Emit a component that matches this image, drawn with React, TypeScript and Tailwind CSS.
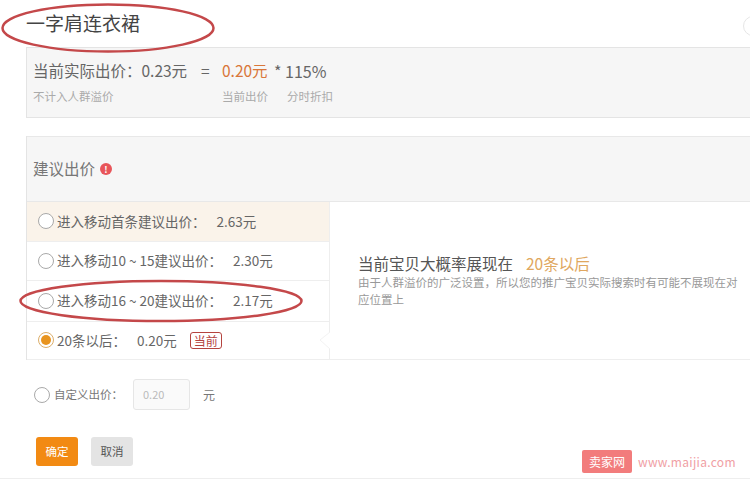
import React from 'react';

const font = { fontFamily: '"Noto Sans CJK SC", "Liberation Sans", sans-serif' };

const Radio = ({ checked = false }: { checked?: boolean }) => (
  <span className={`flex h-[16px] w-[16px] shrink-0 items-center justify-center rounded-full border bg-white ${checked ? 'border-[#dcae6a]' : 'border-[#a9a9a9]'}`}>
    {checked && <span className="h-[10px] w-[10px] rounded-full bg-[#e8941f]" />}
  </span>
);

const rows = [
  { label: '进入移动首条建议出价：', price: '2.63元', cls: 'bg-[#faf3ea] h-[39px]' },
  { label: '进入移动10 ~ 15建议出价：', price: '2.30元', cls: 'h-[39px] border-t border-[#eeeeee]' },
  { label: '进入移动16 ~ 20建议出价：', price: '2.17元', cls: 'h-[41px] border-t border-[#eeeeee]' },
];

export default function App() {
  return (
    <div className="relative h-[481px] w-[750px] overflow-hidden bg-white text-[#666666]" style={font}>
      <h1 className="h-[47px] pl-[26px] pt-[8px] text-[19px] leading-[30px] text-[#444444]">一字肩连衣裙</h1>

      <div className="ml-[26px] h-[71px] border border-r-0 border-[#e4e4e4] bg-[#f6f6f6] pl-[6px] pt-[12px]">
        <div className="flex h-[22px] items-center text-[15.5px] text-[#666666]">
          <span className="w-[168px]">当前实际出价：0.23元</span>
          <span className="w-[21px]">=</span>
          <span className="w-[52px] text-[#d9773a]">0.20元</span>
          <span className="text-[16px]">* 115%</span>
        </div>
        <div className="mt-[6px] flex text-[11.5px] leading-[16px] text-[#aaaaaa]">
          <span className="w-[189px]">不计入人群溢价</span>
          <span className="w-[65px]">当前出价</span>
          <span>分时折扣</span>
        </div>
      </div>

      <div className="ml-[26px] mt-[18px] border-l border-[#e4e4e4]">
        <div className="flex h-[66px] items-center gap-[5px] border-y border-[#e8e8e8] bg-[#f6f6f6] pl-[6px] text-[15.5px] text-[#777777]">
          <span>建议出价</span>
          <span className="flex h-[12px] w-[12px] items-center justify-center rounded-full bg-[#e8555a] text-[9px] font-bold leading-none text-white">!</span>
        </div>

        <div className="flex border-b border-[#eeeeee]">
          <div className="w-[303px] shrink-0 border-r border-[#eeeeee]">
            {rows.map((r) => (
              <div key={r.label} className={`flex items-center pb-[1px] pl-[11px] text-[13.5px] text-[#666666] ${r.cls}`}>
                <Radio />
                <span className="ml-[3px]">{r.label}</span>
                <span className="ml-[11px]">{r.price}</span>
              </div>
            ))}
            <div className="flex h-[38px] items-center border-t border-[#eeeeee] pb-[1px] pl-[11px] text-[13.5px] text-[#666666]">
              <Radio checked />
              <span className="ml-[3px]">20条以后：</span>
              <span className="ml-[11px]">0.20元</span>
              <span className="ml-[13px] rounded-[3px] border border-[#b5443f] px-[3px] text-[12px] leading-[15px] text-[#b5443f]">当前</span>
            </div>
          </div>
          <div className="flex-1 pl-[28px] pt-[50px]">
            <div className="flex text-[15.5px] leading-[22px] text-[#555555]">
              <span>当前宝贝大概率展现在</span>
              <span className="ml-[13px] text-[#e0a760]">20条以后</span>
            </div>
            <p className="w-[383px] text-[11.5px] leading-[17px] text-[#999999]">
              由于人群溢价的广泛设置，所以您的推广宝贝实际搜索时有可能不展现在对应位置上
            </p>
          </div>
        </div>
      </div>

      <div className="ml-[34px] mt-[19px] flex h-[31px] items-center text-[#777777]">
        <Radio />
        <span className="ml-[4px] w-[79px] text-[11.5px]">自定义出价：</span>
        <div className="flex h-[31px] w-[57px] items-center rounded-[3px] border border-[#e6e6e6] bg-[#fafafa] pl-[9px] text-[11px] text-[#bbbbbb]">0.20</div>
        <span className="ml-[13px] text-[12px]">元</span>
      </div>

      <div className="ml-[36px] mt-[27px] flex gap-[13px] text-[11.5px]">
        <button className="h-[29px] w-[42px] rounded-[3px] bg-[#f28a13] text-white">确定</button>
        <button className="h-[29px] w-[42px] rounded-[3px] bg-[#e4e4e4] text-[#555555]">取消</button>
      </div>

      {/* hand-drawn marks on top of the page */}
      <svg className="absolute left-0 top-0" width="750" height="481" fill="none">
        <ellipse cx="108" cy="28" rx="105.5" ry="23.5" stroke="#c4484a" strokeWidth="2.5" />
        <ellipse cx="161" cy="301" rx="140.5" ry="20" stroke="#c4484a" strokeWidth="2.5" />
        <path d="M330 332 L320 340 L330 349" stroke="#f3f3f3" fill="#ffffff" />
        <circle cx="753" cy="26" r="9.5" stroke="#e6e6e6" />
      </svg>

      <div className="absolute left-[582px] top-[450px] flex items-center">
        <span className="flex h-[23px] w-[50px] items-center justify-center rounded-[2px] bg-[#f27c7c] text-[12px] text-white">卖家网</span>
        <span className="ml-[6px] text-[12px] tracking-[0.3px] text-[#f0a0a4]">www.maijia.com</span>
      </div>

      <div className="absolute bottom-[2px] left-0 h-px w-full bg-[#eeeeee]" />
    </div>
  );
}
